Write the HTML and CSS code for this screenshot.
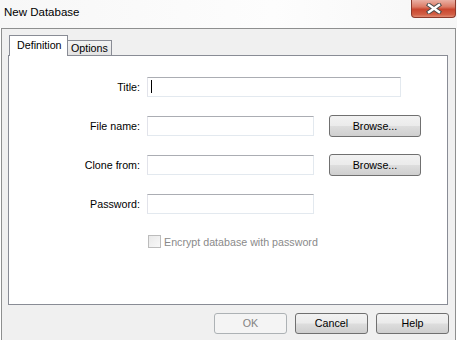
FILE: index.html
```html
<!DOCTYPE html>
<html lang="en">
<head>
    <meta charset="UTF-8">
    <title>New Database</title>
    <link rel="stylesheet" href="styles.css">
</head>
<body>
    <div class="window">
        <div class="titlebar">
            <span class="title">New Database</span>
            <div class="close">
                <svg width="16" height="11" viewBox="0 0 16 11">
                    <path d="M3 2 L13 9 M13 2 L3 9" stroke="#4a4a4a" stroke-width="4.4" stroke-linecap="square"/>
                    <path d="M3 2 L13 9 M13 2 L3 9" stroke="#ffffff" stroke-width="2.4" stroke-linecap="square"/>
                </svg>
            </div>
        </div>

        <div class="frame">
            <div class="tabs">
                <div class="tab active">Definition</div>
                <div class="tab">Options</div>
            </div>

            <div class="panel">
                <div class="fields">
                    <div class="field">
                        <label>Title:</label>
                        <div class="textbox wide"><span class="caret"></span></div>
                    </div>
                    <div class="field">
                        <label>File name:</label>
                        <div class="textbox"></div>
                        <div class="btn browse">Browse...</div>
                    </div>
                    <div class="field">
                        <label>Clone from:</label>
                        <div class="textbox"></div>
                        <div class="btn browse">Browse...</div>
                    </div>
                    <div class="field">
                        <label>Password:</label>
                        <div class="textbox"></div>
                    </div>
                </div>
                <div class="check">
                    <span class="box"></span>
                    <span>Encrypt database with password</span>
                </div>
            </div>

            <div class="actions">
                <div class="btn disabled">OK</div>
                <div class="btn">Cancel</div>
                <div class="btn">Help</div>
            </div>
        </div>
    </div>
</body>
</html>
```

FILE: styles.css
```css
:root {
    --frame-border: #8e8f8f;
    --tab-border: #898c95;
    --face: #f0f0f0;
    --text: #000000;
    --text-disabled: #8a8a8a;
}

* {
    margin: 0;
    padding: 0;
    box-sizing: border-box;
}

body {
    font-family: 'Liberation Sans', Arial, sans-serif;
    font-size: 10.7px;
    color: var(--text);
    background: #ffffff;
    overflow: hidden;
}

.window {
    width: 457px;
    height: 340px;
}

.titlebar {
    height: 28px;
    display: flex;
    justify-content: space-between;
    align-items: flex-start;
    background: linear-gradient(to right, #f7f7f7, #fdfdfd 60%, #f6f6f6);
}

.title {
    font-size: 11.5px;
    line-height: 14px;
    margin: 5px 0 0 4px;
}

.close {
    width: 45px;
    height: 18px;
    margin-right: 1px;
    display: flex;
    align-items: center;
    justify-content: center;
    border: 1px solid #8c3a2c;
    border-top: none;
    border-radius: 0 0 4px 4px;
    background: linear-gradient(#eab0a4, #dc7b66 40%, #c9462f 55%, #d25f45 85%, #e08a72);
}

.frame {
    margin: 0 1px;
    height: 312px;
    border: 1px solid var(--frame-border);
    border-bottom: none;
    background: var(--face);
    padding: 6px 7px 0 6px;
}

.tabs {
    display: flex;
    align-items: flex-end;
    height: 21px;
    padding-left: 1px;
    margin-bottom: -1px;
    position: relative;
}

.tab {
    width: 44px;
    height: 16px;
    line-height: 15px;
    padding-left: 3px;
    border: 1px solid var(--tab-border);
    border-left: none;
    background: linear-gradient(#f3f3f3, #e3e3e3);
}

.tab.active {
    width: 59px;
    height: 21px;
    line-height: 19px;
    padding-left: 7px;
    border-left: 1px solid var(--tab-border);
    border-bottom: none;
    background: #ffffff;
}

.panel {
    height: 250px;
    border: 1px solid var(--tab-border);
    background: #ffffff;
    padding-top: 20px;
}

.fields {
    display: flex;
    flex-direction: column;
    gap: 17px;
}

.field {
    display: flex;
    align-items: center;
    height: 22px;
}

.field label {
    width: 131px;
    margin-right: 7px;
    text-align: right;
}

.textbox {
    width: 167px;
    height: 20px;
    border: 1px solid;
    border-color: #abadb3 #e3e9ef #e3e9ef #e2e3ea;
    background: #ffffff;
    padding: 2px 0 0 3px;
}

.textbox.wide {
    width: 254px;
}

.caret {
    display: block;
    width: 1px;
    height: 13px;
    background: #000000;
}

.btn {
    width: 73px;
    height: 21px;
    line-height: 19px;
    text-align: center;
    border: 1px solid #707070;
    border-radius: 3px;
    background: linear-gradient(#f2f2f2, #ebebeb 48%, #dddddd 52%, #cfcfcf);
}

.btn.browse {
    width: 92px;
    height: 22px;
    line-height: 20px;
    margin-left: 15px;
}

.btn.disabled {
    border-color: #adb2b5;
    background: #f4f4f4;
    color: #838383;
}

.check {
    display: flex;
    align-items: center;
    gap: 3px;
    margin-top: 20px;
    padding-left: 139px;
    color: var(--text-disabled);
}

.box {
    width: 13px;
    height: 13px;
    border: 1px solid #bcbcbc;
    background: linear-gradient(135deg, #e9e9e9, #f8f8f8);
}

.actions {
    display: flex;
    justify-content: flex-end;
    gap: 8px;
    margin-top: 8px;
    margin-right: -1px;
}
```
